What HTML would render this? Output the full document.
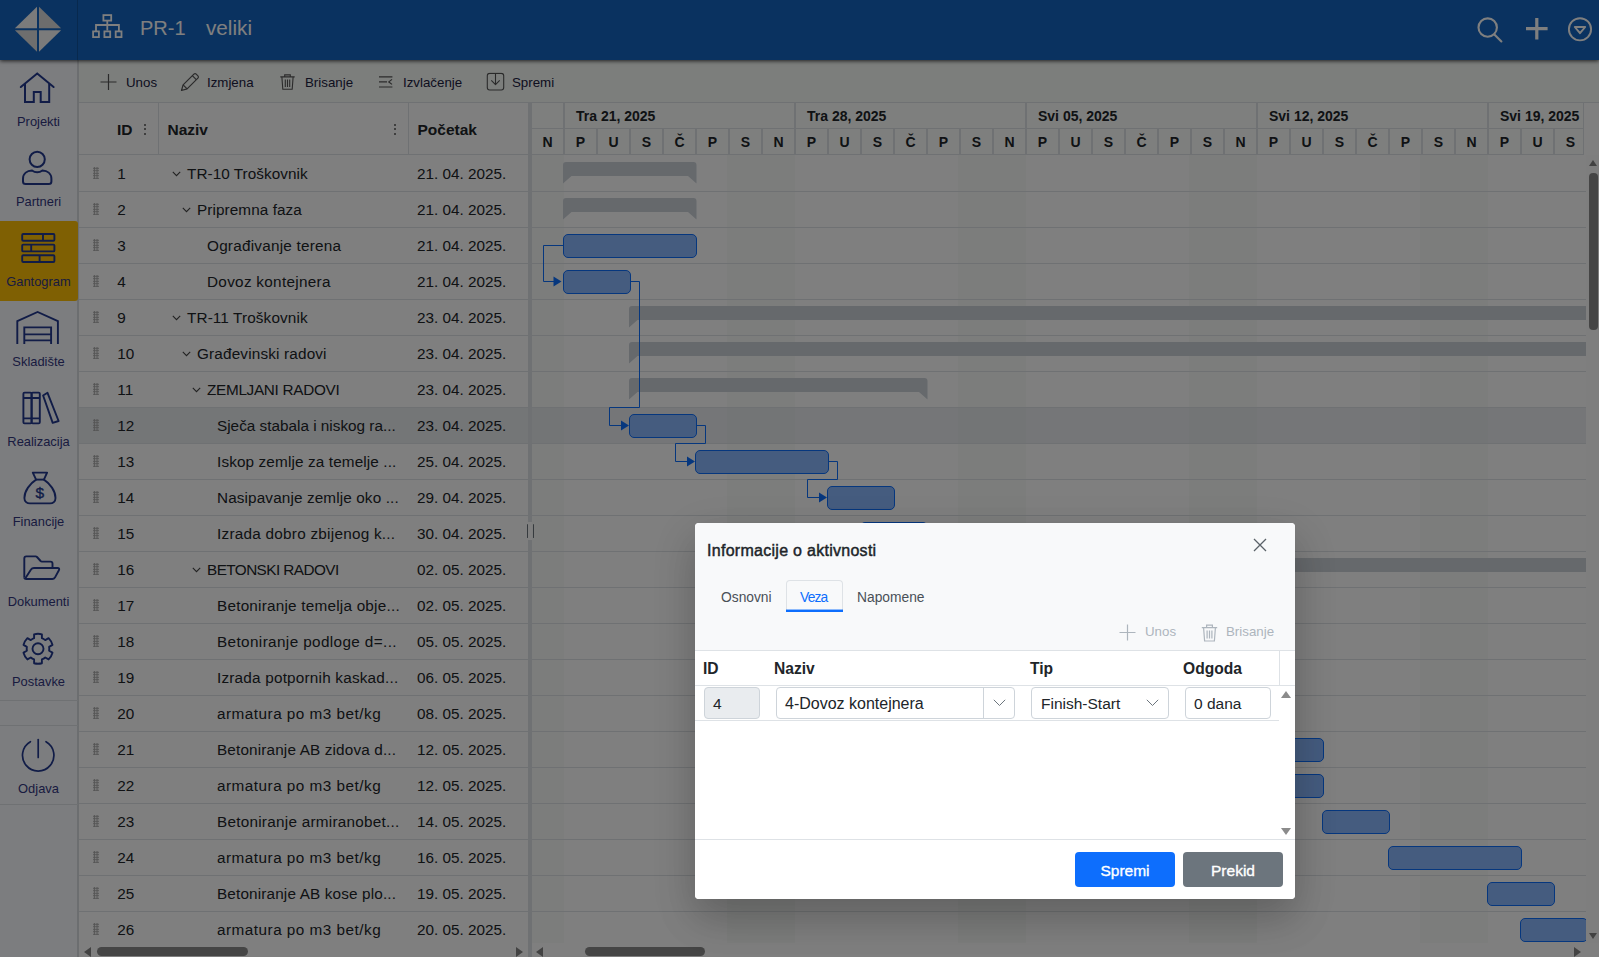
<!DOCTYPE html>
<html lang="hr"><head><meta charset="utf-8"><title>Gantogram</title>
<style>
html,body{margin:0;padding:0;background:#fff;}
body{width:1601px;height:958px;overflow:hidden;font-family:"Liberation Sans",sans-serif;color:#212529;}
#app{position:absolute;left:0;top:0;width:1599px;height:956.5px;overflow:hidden;background:#fff;}
#app *{box-sizing:border-box;}
.hdr{position:absolute;left:0;top:0;width:1599px;height:60px;background:#1565c0;box-shadow:0 1px 4px rgba(0,0,0,.75);z-index:5;}
.logo{position:absolute;left:0;top:0;width:78px;height:60px;border-right:1px solid rgba(0,0,0,.18);}
.orgico{position:absolute;left:90px;top:12px;}
.hdr .t1,.hdr .t2{position:absolute;top:16px;font-size:20px;line-height:24px;color:#fff;white-space:nowrap;}
.hdr .t1{left:140px;}
.hdr .t2{left:206px;font-size:20.7px;}
.hi{position:absolute;}
/* sidebar */
.side{position:absolute;left:0;top:60px;width:79px;height:897px;background:#f8fafe;border-right:2px solid #d9dce0;}
.sit{position:absolute;left:0;width:78px;height:80px;}
.sit svg{position:absolute;}
.sit span{position:absolute;left:0;width:77px;text-align:center;font-size:12.9px;line-height:16px;color:#33377f;white-space:nowrap;}
.sit.act{background:#ffc107;border-radius:0 3px 3px 0;}
.shr{position:absolute;left:0;width:78px;height:1px;background:#dee2e6;}
/* toolbar */
.tbar{position:absolute;left:79px;top:60px;width:1520px;height:42px;background:#f8fcf9;}
.ti{position:absolute;top:0;height:42px;margin-left:-79px;}
.ti svg{position:absolute;left:0;top:50%;transform:translateY(-50%);margin-top:1px;}
.ti span{position:absolute;top:15px;font-size:13.3px;line-height:16px;color:#202040;white-space:nowrap;}
/* grid */
.grid{position:absolute;left:79px;top:102px;width:449px;height:855px;background:#fff;overflow:hidden;}
.gh{position:absolute;left:0;top:0;width:449px;height:53px;border-top:1px solid #dee2e6;border-bottom:1px solid #dee2e6;font-weight:700;font-size:15.5px;line-height:20px;color:#212529;}
.in{position:absolute;left:1px;top:0;right:0;bottom:0;}
.gh .in>div{position:absolute;}
.c-id{left:37px;top:16.8px;}
.c-nm{left:87.5px;top:16.8px;}
.c-st{left:337.5px;top:16.8px;}
.vsep{top:0;width:1px;height:52px;background:#dee2e6;}
.dots{top:21px;width:3px;height:12px;}
.dots i{display:block;width:2px;height:2px;background:#555;margin-bottom:2.4px;border-radius:1px;}
.gr{position:absolute;left:0;width:449px;border-bottom:1px solid #dee2e6;font-size:15.3px;line-height:20px;white-space:nowrap;color:#212529;}
.gr.sel{background:#e9ecef;}
.gr span{position:absolute;top:8.1px;}
.gr .drag{left:13.4px;top:10.5px;width:5.4px;height:12.5px;background:radial-gradient(circle,#a8a8a8 0.95px,rgba(168,168,168,0) 1.25px) 0 0/2.7px 2.5px;}
.gr .rid{left:37.3px;}
.gr .rd{left:337px;}
.gr .chev{position:absolute;top:15px;}
.hsb,.hsb2{position:absolute;left:0;bottom:0;height:14px;background:#fff;}
.hsb{width:449px;}
.thumb{position:absolute;top:4px;height:9px;border-radius:4.5px;background:#8b8b8b;}
.al,.ar,.au,.ad{position:absolute;width:0;height:0;}
.al{left:4px;top:3.5px;border:5px solid transparent;border-right:7px solid #858585;border-left:0;}
.ar{top:3.5px;border:5px solid transparent;border-left:7px solid #858585;border-right:0;}
.split{position:absolute;left:528px;top:102px;width:4px;height:855px;background:#dee2e6;}
.sph{position:absolute;left:526px;top:522px;width:9px;height:18px;z-index:3;}
.sph b{position:absolute;left:2px;top:0;width:4px;height:18px;background:#fff;}
.sph i{position:absolute;top:2px;width:1.6px;height:14px;background:#6c757d;border-radius:1px;}
.sph i:nth-of-type(1){left:0.7px;}
.sph i:nth-of-type(2){left:6.8px;}
/* chart */
.chart{position:absolute;left:532px;top:102px;width:1067px;height:855px;background:#fff;overflow:hidden;}
.we{position:absolute;top:53px;height:790px;background:#f8faf8;}
.cl{position:absolute;left:0;width:1054px;height:1px;background:#dee2e6;}
.csel{position:absolute;left:0;width:1054px;height:35px;background:rgba(210,216,224,.45);}
.ctop{position:absolute;left:0;top:0;width:1067px;height:1px;background:#dee2e6;}
.tl{position:absolute;left:0;top:0;width:1052px;height:53px;background:#fcfefc;border-top:1px solid #dee2e6;border-bottom:1px solid #dee2e6;border-right:1px solid #dee2e6;font-weight:700;font-size:14px;color:#212529;overflow:hidden;}
.wk{position:absolute;top:0;height:26px;border-right:2px solid #dee2e6;border-bottom:1px solid #dee2e6;line-height:26px;white-space:nowrap;}
.wk span{position:absolute;left:11px;top:0;}
.dy{position:absolute;top:26px;height:26px;border-right:2px solid #dee2e6;text-align:center;line-height:26px;}
.tk{position:absolute;height:24px;border:1px solid #0d6efd;border-radius:5px;background:#8ab8ff;}
.sm{position:absolute;}
.cn{position:absolute;left:0;top:0;}
.vsb{position:absolute;left:1054px;top:53px;width:13px;height:802px;background:#fcfcfc;}
.au{left:3px;top:4.5px;border:4.5px solid transparent;border-bottom:6.5px solid #858585;border-top:0;}
.ad{left:3px;top:778px;border:4.5px solid transparent;border-top:6.5px solid #858585;border-bottom:0;}
.vth{position:absolute;left:3.3px;top:18px;width:8.7px;height:157px;border-radius:4px;background:#8b8b8b;}
.hsb2{width:1067px;}
/* overlay */
.ovl{position:absolute;left:0;top:0;width:1599px;height:956.5px;background:rgba(0,0,0,.5);z-index:10;}
/* modal */
.modal{position:absolute;left:695px;top:523px;width:600px;height:376px;background:#fff;border-radius:4px;z-index:20;overflow:hidden;box-shadow:0 20px 38px 0 rgba(0,0,0,.15),0 14px 46px 2px rgba(0,0,0,.10);}
.mhead{position:absolute;left:0;top:0;width:600px;height:128px;background:#f8f9fa;}
.mtitle{position:absolute;left:12px;top:17.7px;font-weight:400;font-size:16px;letter-spacing:0.28px;-webkit-text-stroke:0.45px #212529;line-height:20px;color:#212529;white-space:nowrap;}
.mclose{position:absolute;left:558px;top:15px;}
.tab{position:absolute;top:67px;font-size:13.8px;line-height:16px;color:#495057;white-space:nowrap;}
.tabbox{position:absolute;left:91px;top:57px;width:57px;height:31px;border:1px solid #dee2e6;border-bottom:none;border-radius:4px 4px 0 0;background:#f8f9fa;}
.tabline{position:absolute;left:91px;top:86px;width:57px;height:3px;background:linear-gradient(to bottom,rgba(13,110,253,.45) 0 1px,#0d6efd 1px);}
.mt{position:absolute;top:101.3px;font-size:13.3px;line-height:16px;color:#adb5bd;white-space:nowrap;}
.mgrid{position:absolute;left:0;top:127px;width:600px;height:190px;background:#fff;border-top:1px solid #dee2e6;border-bottom:1px solid #dee2e6;}
.mgh{position:absolute;left:0;top:0;width:600px;height:35px;border-bottom:1px solid #dee2e6;font-weight:700;font-size:15.6px;line-height:20px;color:#212529;}
.mgh span{position:absolute;top:7.7px;}
.mrow{position:absolute;left:0;top:35px;width:584px;height:35px;border-bottom:1px solid #dee2e6;font-size:15.5px;line-height:20px;color:#212529;}
.inp{position:absolute;top:1px;height:32px;border:1px solid #ced4da;border-radius:4px;background:#fff;}
.inp span{position:absolute;top:6px;white-space:nowrap;}
.mfoot{position:absolute;left:0;top:317px;width:600px;height:59px;background:#fff;}
.btn{position:absolute;top:12px;width:100px;height:35px;border-radius:4px;color:#fff;font-size:15.5px;line-height:37px;text-align:center;-webkit-text-stroke:0.35px #fff;}

</style></head><body>
<div id="app">
<div class="hdr">
<div class="logo"><svg width="78" height="60" viewBox="0 0 78 60">
<polygon points="14.9,28.2 37,6.7 37,28.2" fill="#f6f6f6"/>
<polygon points="39,6.7 61.1,28.2 39,28.2" fill="#dadada"/>
<polygon points="14.9,30.2 37,30.2 37,51.700" fill="#dcdcdc"/>
<polygon points="39,30.2 61.1,30.2 39,51.700" fill="#f6f6f6"/>
</svg></div>
<svg class="orgico" width="36" height="30" viewBox="90 12 36 30" fill="none" stroke="#fff" stroke-width="1.8">
<rect x="103.4" y="15.1" width="7.8" height="5.5"/><path d="M107.3 20.6v10M96 31v-6h22.9v6"/>
<rect x="93.1" y="31.4" width="5.8" height="5.7"/><rect x="104.4" y="31.4" width="5.8" height="5.7"/><rect x="115.7" y="31.4" width="5.8" height="5.7"/>
</svg>
<span class="t1">PR-1</span><span class="t2">veliki</span>
<svg class="hi" style="left:1476px;top:16px" width="28" height="28" viewBox="0 0 28 28" fill="none" stroke="#fff" stroke-width="2.1" stroke-linecap="round"><circle cx="11.700" cy="11.600" r="9.200"/><path d="M18.400 18.400l7 7"/></svg>
<svg class="hi" style="left:1524px;top:16px" width="26" height="26" viewBox="0 0 26 26" fill="none" stroke="#fff" stroke-width="3.200"><path d="M12.800 2v21.400M2 12.700h21.600"/></svg>
<svg class="hi" style="left:1567px;top:17px" width="26" height="26" viewBox="0 0 26 26" fill="none" stroke="#fff" stroke-width="1.900"><circle cx="13" cy="12.300" r="11.100"/><path d="M7.800 10h10.400l-5.200 6.200z" stroke-linejoin="round"/></svg>
</div>
<div class="side">
<div class="sit" style="top:0"><svg width="78" height="52" viewBox="0 0 78 52" fill="none" stroke="#22398f" stroke-width="2" stroke-linecap="round" stroke-linejoin="miter"><path d="M20.8 27L37.2 13.6 53.6 27"/><path d="M25 24v18h8.8V32h6.900v10h8.500V24" stroke-linecap="butt"/></svg><span style="top:54px">Projekti</span></div>
<div class="sit" style="top:80px"><svg width="78" height="52" viewBox="0 0 78 52" fill="none" stroke="#22398f" stroke-width="2"><circle cx="37.2" cy="19.3" r="7.6"/><path d="M23 41.500v-2.800c0-5.200 4.200-8 9-8.200 1.600 1.200 3.200 1.800 5.200 1.800s3.600-.6 5.200-1.800c4.800.2 9 3 9 8.200v2.800c0 1.600-1 2.600-2.600 2.600H25.600c-1.600 0-2.600-1-2.600-2.600z"/></svg><span style="top:54px">Partneri</span></div>
<div class="sit act" style="top:161px;height:80px"><svg style="top:-1px" width="78" height="52" viewBox="0 0 78 52" fill="none" stroke="#22398f" stroke-width="1.9"><rect x="22.2" y="14" width="32.2" height="6.8" rx="1"/><path d="M43 14v6.800"/><rect x="22.2" y="24.6" width="32.2" height="6.8" rx="1"/><path d="M31.200 24.600v6.800"/><rect x="22.2" y="35.2" width="32.2" height="6.8" rx="1"/><path d="M39.600 35.200v6.800"/></svg><span style="top:53px">Gantogram</span></div>
<div class="sit" style="top:240px"><svg width="78" height="52" viewBox="0 0 78 52" fill="none" stroke="#22398f" stroke-width="1.9" stroke-linejoin="miter"><path d="M17.300 44V21.200L37.600 12l20.300 9.200V44"/><path d="M24.300 44V27.400h26.800V44M24.300 34.400h26.800M24.300 40.400h26.800"/></svg><span style="top:54px">Skladište</span></div>
<div class="sit" style="top:320px"><svg width="78" height="52" viewBox="0 0 78 52" fill="none" stroke="#22398f" stroke-width="1.9" stroke-linejoin="round"><rect x="23.4" y="12.6" width="8.2" height="30.8" rx="1.2"/><rect x="31.600" y="12.600" width="8.200" height="30.800" rx="1.2"/><path d="M23.400 18h16.400M23.400 38.400h16.400"/><path d="M43.100 15.500l4.400-2.700 11.100 28.200-5.900 1.900z"/></svg><span style="top:54px">Realizacija</span></div>
<div class="sit" style="top:400px"><svg width="78" height="52" viewBox="0 0 78 52" fill="none" stroke="#22398f" stroke-width="1.9" stroke-linejoin="round"><path d="M32.800 12.600H47.100L43.900 19.600C50 23.500 55.500 31 55.500 38c0 3.500-2.500 5.400-5.500 5.400H30c-3 0-5.600-1.900-5.600-5.400 0-7 5.600-14.500 11.700-18.400z"/><path d="M36.100 19.600h7.800"/><text x="39.900" y="38.300" font-family="Liberation Sans,sans-serif" font-size="15.5" font-weight="400" fill="#22398f" stroke="#22398f" stroke-width="0.35" text-anchor="middle">$</text></svg><span style="top:54px">Financije</span></div>
<div class="sit" style="top:480px"><svg width="78" height="52" viewBox="0 0 78 52" fill="none" stroke="#22398f" stroke-width="1.9" stroke-linejoin="round"><path d="M24.300 37.500V18.400Q24.300 16.400 26.300 16.400H35.600Q36.400 16.400 37 17L40.600 21Q41 21.600 42 21.600H50.500Q52.500 21.600 52.500 23.600V28"/><path d="M25.200 38.400L31 29.600Q32 28 34 28H57.400Q60 28 58.900 30.300L54.900 37.600Q54 39 52.400 39H26.300Q24.300 39 24.300 37.500"/></svg><span style="top:54px">Dokumenti</span></div>
<div class="sit" style="top:560px"><svg width="78" height="52" viewBox="0 0 78 52" fill="none" stroke="#22398f" stroke-width="1.9" stroke-linejoin="round"><circle cx="38" cy="28.800" r="5.500"/><path d="M34.10 18.19 L34.10 14.32 A15.00 15.00 0 0 1 41.90 14.32 L41.90 18.19 A11.30 11.30 0 0 1 45.23 20.12 L48.59 18.18 A15.00 15.00 0 0 1 52.49 24.94 L49.13 26.87 A11.30 11.30 0 0 1 49.13 30.73 L52.49 32.66 A15.00 15.00 0 0 1 48.59 39.42 L45.23 37.48 A11.30 11.30 0 0 1 41.90 39.41 L41.90 43.28 A15.00 15.00 0 0 1 34.10 43.28 L34.10 39.41 A11.30 11.30 0 0 1 30.77 37.48 L27.41 39.42 A15.00 15.00 0 0 1 23.51 32.66 L26.87 30.73 A11.30 11.30 0 0 1 26.87 26.87 L23.51 24.94 A15.00 15.00 0 0 1 27.41 18.18 L30.77 20.12 A11.30 11.30 0 0 1 34.10 18.19 z"/></svg><span style="top:54px">Postavke</span></div>
<div class="shr" style="top:640px"></div>
<div class="shr" style="top:665px"></div>
<div class="sit" style="top:666px"><svg width="78" height="56" viewBox="0 0 78 56" fill="none" stroke="#22398f" stroke-width="1.700" stroke-linecap="round"><path d="M38.200 13.500v18"/><path d="M30.400 15.700a15.700 15.700 0 1 0 15.600 0"/></svg><span style="top:55px">Odjava</span></div>
<div class="shr" style="top:744px"></div>
</div>
<div class="tbar">
<div class="ti" style="left:100px"><svg width="17" height="17" viewBox="0 0 17 17" stroke="#555" stroke-width="1.2" fill="none"><path d="M8.5 0.5v16M0.5 8.5h16"/></svg><span style="left:26px">Unos</span></div>
<div class="ti" style="left:180px"><svg width="20" height="20" viewBox="0 0 20 20" stroke="#555" stroke-width="1.2" fill="none" stroke-linejoin="round"><path d="M1.5 18.5l1.6-5.6L13.9 2.1a1.6 1.6 0 0 1 2.3 0l1.7 1.7a1.6 1.6 0 0 1 0 2.3L7.1 16.9z"/><path d="M3.1 12.9l4 4M12.3 3.7l4 4"/></svg><span style="left:27px">Izmjena</span></div>
<div class="ti" style="left:280px"><svg width="15" height="16" viewBox="0 0 15 16" stroke="#555" stroke-width="1.1" fill="none"><path d="M0.300 2.900h14.400M4.700 2.800V0.900h5.600v1.900M1.900 3.100l.9 12.200h9.400l.9-12.200M5.300 5.500v7.400M7.500 5.500v7.400M9.700 5.500v7.400"/></svg><span style="left:25px">Brisanje</span></div>
<div class="ti" style="left:379px"><svg width="14" height="12" viewBox="0 0 14 12" stroke="#555" stroke-width="1.2" fill="none"><path d="M0 0.800h13.400M0 5.900h8M0 11h13.400M13 3.400l-3.200 2.500 3.200 2.500"/></svg><span style="left:24px">Izvlačenje</span></div>
<div class="ti" style="left:486px"><svg width="19" height="19" viewBox="0 0 19 19" stroke="#555" stroke-width="1.1" fill="none" stroke-linejoin="round"><rect x="1.300" y="0.900" width="16.400" height="16.600" rx="2.400"/><path d="M9.500 1.500v10.600M5.300 7.900l4.200 4.200 4.200-4.200"/></svg><span style="left:26px">Spremi</span></div>
</div>
<div class="grid">
<div class="gh"><div class="in"><div class="c-id">ID</div><div class="dots" style="left:64px"><i></i><i></i><i></i></div><div class="vsep" style="left:78px"></div><div class="c-nm">Naziv</div><div class="dots" style="left:314px"><i></i><i></i><i></i></div><div class="vsep" style="left:328px"></div><div class="c-st">Početak</div></div></div>
<div class="gr" style="top:54px;height:36px"><div class="in"><span class="drag"></span><span class="rid">1</span><svg class="chev" style="left:92px" width="9" height="6" viewBox="0 0 9 6" fill="none" stroke="#444" stroke-width="1.1"><path d="M0.8 0.8l3.7 3.8L8.2 0.8"/></svg><span class="rn" style="left:107px;letter-spacing:0.050px">TR-10 Troškovnik</span><span class="rd">21. 04. 2025.</span></div></div>
<div class="gr" style="top:90px;height:36px"><div class="in"><span class="drag"></span><span class="rid">2</span><svg class="chev" style="left:102px" width="9" height="6" viewBox="0 0 9 6" fill="none" stroke="#444" stroke-width="1.1"><path d="M0.8 0.8l3.7 3.8L8.2 0.8"/></svg><span class="rn" style="left:117px;letter-spacing:0.086px">Pripremna faza</span><span class="rd">21. 04. 2025.</span></div></div>
<div class="gr" style="top:126px;height:36px"><div class="in"><span class="drag"></span><span class="rid">3</span><span class="rn" style="left:127px;letter-spacing:0.228px">Ograđivanje terena</span><span class="rd">21. 04. 2025.</span></div></div>
<div class="gr" style="top:162px;height:36px"><div class="in"><span class="drag"></span><span class="rid">4</span><span class="rn" style="left:127px;letter-spacing:0.294px">Dovoz kontejnera</span><span class="rd">21. 04. 2025.</span></div></div>
<div class="gr" style="top:198px;height:36px"><div class="in"><span class="drag"></span><span class="rid">9</span><svg class="chev" style="left:92px" width="9" height="6" viewBox="0 0 9 6" fill="none" stroke="#444" stroke-width="1.1"><path d="M0.8 0.8l3.7 3.8L8.2 0.8"/></svg><span class="rn" style="left:107px;letter-spacing:0.125px">TR-11 Troškovnik</span><span class="rd">23. 04. 2025.</span></div></div>
<div class="gr" style="top:234px;height:36px"><div class="in"><span class="drag"></span><span class="rid">10</span><svg class="chev" style="left:102px" width="9" height="6" viewBox="0 0 9 6" fill="none" stroke="#444" stroke-width="1.1"><path d="M0.8 0.8l3.7 3.8L8.2 0.8"/></svg><span class="rn" style="left:117px;letter-spacing:0.167px">Građevinski radovi</span><span class="rd">23. 04. 2025.</span></div></div>
<div class="gr" style="top:270px;height:36px"><div class="in"><span class="drag"></span><span class="rid">11</span><svg class="chev" style="left:112px" width="9" height="6" viewBox="0 0 9 6" fill="none" stroke="#444" stroke-width="1.1"><path d="M0.8 0.8l3.7 3.8L8.2 0.8"/></svg><span class="rn" style="left:127px;letter-spacing:-0.300px">ZEMLJANI RADOVI</span><span class="rd">23. 04. 2025.</span></div></div>
<div class="gr sel" style="top:306px;height:36px"><div class="in"><span class="drag"></span><span class="rid">12</span><span class="rn" style="left:137px;letter-spacing:0.007px">Sječa stabala i niskog ra...</span><span class="rd">23. 04. 2025.</span></div></div>
<div class="gr" style="top:342px;height:36px"><div class="in"><span class="drag"></span><span class="rid">13</span><span class="rn" style="left:137px;letter-spacing:0.130px">Iskop zemlje za temelje ...</span><span class="rd">25. 04. 2025.</span></div></div>
<div class="gr" style="top:378px;height:36px"><div class="in"><span class="drag"></span><span class="rid">14</span><span class="rn" style="left:137px;letter-spacing:0.123px">Nasipavanje zemlje oko ...</span><span class="rd">29. 04. 2025.</span></div></div>
<div class="gr" style="top:414px;height:36px"><div class="in"><span class="drag"></span><span class="rid">15</span><span class="rn" style="left:137px;letter-spacing:0.254px">Izrada dobro zbijenog k...</span><span class="rd">30. 04. 2025.</span></div></div>
<div class="gr" style="top:450px;height:36px"><div class="in"><span class="drag"></span><span class="rid">16</span><svg class="chev" style="left:112px" width="9" height="6" viewBox="0 0 9 6" fill="none" stroke="#444" stroke-width="1.1"><path d="M0.8 0.8l3.7 3.8L8.2 0.8"/></svg><span class="rn" style="left:127px;letter-spacing:-0.560px">BETONSKI RADOVI</span><span class="rd">02. 05. 2025.</span></div></div>
<div class="gr" style="top:486px;height:36px"><div class="in"><span class="drag"></span><span class="rid">17</span><span class="rn" style="left:137px;letter-spacing:0.222px">Betoniranje temelja obje...</span><span class="rd">02. 05. 2025.</span></div></div>
<div class="gr" style="top:522px;height:36px"><div class="in"><span class="drag"></span><span class="rid">18</span><span class="rn" style="left:137px;letter-spacing:0.376px">Betoniranje podloge d=...</span><span class="rd">05. 05. 2025.</span></div></div>
<div class="gr" style="top:558px;height:36px"><div class="in"><span class="drag"></span><span class="rid">19</span><span class="rn" style="left:137px;letter-spacing:0.208px">Izrada potpornih kaskad...</span><span class="rd">06. 05. 2025.</span></div></div>
<div class="gr" style="top:594px;height:36px"><div class="in"><span class="drag"></span><span class="rid">20</span><span class="rn" style="left:137px;letter-spacing:0.490px">armatura po m3 bet/kg</span><span class="rd">08. 05. 2025.</span></div></div>
<div class="gr" style="top:630px;height:36px"><div class="in"><span class="drag"></span><span class="rid">21</span><span class="rn" style="left:137px;letter-spacing:0.154px">Betoniranje AB zidova d...</span><span class="rd">12. 05. 2025.</span></div></div>
<div class="gr" style="top:666px;height:36px"><div class="in"><span class="drag"></span><span class="rid">22</span><span class="rn" style="left:137px;letter-spacing:0.490px">armatura po m3 bet/kg</span><span class="rd">12. 05. 2025.</span></div></div>
<div class="gr" style="top:702px;height:36px"><div class="in"><span class="drag"></span><span class="rid">23</span><span class="rn" style="left:137px;letter-spacing:0.250px">Betoniranje armiranobet...</span><span class="rd">14. 05. 2025.</span></div></div>
<div class="gr" style="top:738px;height:36px"><div class="in"><span class="drag"></span><span class="rid">24</span><span class="rn" style="left:137px;letter-spacing:0.490px">armatura po m3 bet/kg</span><span class="rd">16. 05. 2025.</span></div></div>
<div class="gr" style="top:774px;height:36px"><div class="in"><span class="drag"></span><span class="rid">25</span><span class="rn" style="left:137px;letter-spacing:0.154px">Betoniranje AB kose plo...</span><span class="rd">19. 05. 2025.</span></div></div>
<div class="gr" style="top:810px;height:36px"><div class="in"><span class="drag"></span><span class="rid">26</span><span class="rn" style="left:137px;letter-spacing:0.490px">armatura po m3 bet/kg</span><span class="rd">20. 05. 2025.</span></div></div>
<div class="hsb"><span class="al" style="left:5px"></span><span class="thumb" style="left:18px;width:151px"></span><span class="ar" style="left:437px"></span></div>
</div>
<div class="split"></div><div class="sph"><b></b><i></i><i></i></div>
<div class="chart">
<div class="we" style="left:0px;width:32px"></div><div class="we" style="left:195px;width:68px"></div><div class="we" style="left:426px;width:68px"></div><div class="we" style="left:657px;width:68px"></div><div class="we" style="left:888px;width:68px"></div><div class="we" style="left:1119px;width:68px"></div>
<div class="cl" style="top:89px"></div><div class="cl" style="top:125px"></div><div class="cl" style="top:161px"></div><div class="cl" style="top:197px"></div><div class="cl" style="top:233px"></div><div class="cl" style="top:269px"></div><div class="cl" style="top:305px"></div><div class="cl" style="top:341px"></div><div class="cl" style="top:377px"></div><div class="cl" style="top:413px"></div><div class="cl" style="top:449px"></div><div class="cl" style="top:485px"></div><div class="cl" style="top:521px"></div><div class="cl" style="top:557px"></div><div class="cl" style="top:593px"></div><div class="cl" style="top:629px"></div><div class="cl" style="top:665px"></div><div class="cl" style="top:701px"></div><div class="cl" style="top:737px"></div><div class="cl" style="top:773px"></div><div class="cl" style="top:809px"></div><div class="cl" style="top:845px"></div>
<div class="csel" style="top:306px"></div>
<div class="ctop"></div><div class="tl"><div class="wk" style="left:0;width:33px"></div><div class="wk" style="left:33px;width:231px"><span>Tra 21, 2025</span></div><div class="wk" style="left:264px;width:231px"><span>Tra 28, 2025</span></div><div class="wk" style="left:495px;width:231px"><span>Svi 05, 2025</span></div><div class="wk" style="left:726px;width:231px"><span>Svi 12, 2025</span></div><div class="wk" style="left:957px;width:231px"><span>Svi 19, 2025</span></div><div class="dy" style="left:0;width:33px">N</div><div class="dy" style="left:33px;width:33px">P</div><div class="dy" style="left:66px;width:33px">U</div><div class="dy" style="left:99px;width:33px">S</div><div class="dy" style="left:132px;width:33px">Č</div><div class="dy" style="left:165px;width:33px">P</div><div class="dy" style="left:198px;width:33px">S</div><div class="dy" style="left:231px;width:33px">N</div><div class="dy" style="left:264px;width:33px">P</div><div class="dy" style="left:297px;width:33px">U</div><div class="dy" style="left:330px;width:33px">S</div><div class="dy" style="left:363px;width:33px">Č</div><div class="dy" style="left:396px;width:33px">P</div><div class="dy" style="left:429px;width:33px">S</div><div class="dy" style="left:462px;width:33px">N</div><div class="dy" style="left:495px;width:33px">P</div><div class="dy" style="left:528px;width:33px">U</div><div class="dy" style="left:561px;width:33px">S</div><div class="dy" style="left:594px;width:33px">Č</div><div class="dy" style="left:627px;width:33px">P</div><div class="dy" style="left:660px;width:33px">S</div><div class="dy" style="left:693px;width:33px">N</div><div class="dy" style="left:726px;width:33px">P</div><div class="dy" style="left:759px;width:33px">U</div><div class="dy" style="left:792px;width:33px">S</div><div class="dy" style="left:825px;width:33px">Č</div><div class="dy" style="left:858px;width:33px">P</div><div class="dy" style="left:891px;width:33px">S</div><div class="dy" style="left:924px;width:33px">N</div><div class="dy" style="left:957px;width:33px">P</div><div class="dy" style="left:990px;width:33px">U</div><div class="dy" style="left:1023px;width:33px">S</div><div class="dy" style="left:1056px;width:33px">Č</div><div class="dy" style="left:1089px;width:33px">P</div><div class="dy" style="left:1122px;width:33px">S</div><div class="dy" style="left:1155px;width:33px">N</div></div>
<svg class="sm" style="left:31.3px;top:60px" width="133.5" height="22" viewBox="0 0 133.5 22"><path d="M0 3a3 3 0 0 1 3-3h127.5a3 3 0 0 1 3 3v18.5l-8.5-7.5h-116.5l-8.5 7.5z" fill="#ccd2d9"/></svg><svg class="sm" style="left:31.3px;top:96px" width="133.5" height="22" viewBox="0 0 133.5 22"><path d="M0 3a3 3 0 0 1 3-3h127.5a3 3 0 0 1 3 3v18.5l-8.5-7.5h-116.5l-8.5 7.5z" fill="#ccd2d9"/></svg><div class="tk" style="left:31.3px;top:132px;width:133.5px"></div><div class="tk" style="left:31.3px;top:168px;width:67.5px"></div><svg class="sm" style="left:97.3px;top:204px" width="1321.5" height="22" viewBox="0 0 1321.5 22"><path d="M0 3a3 3 0 0 1 3-3h1315.5a3 3 0 0 1 3 3v18.5l-8.5-7.5h-1304.5l-8.5 7.5z" fill="#ccd2d9"/></svg><svg class="sm" style="left:97.3px;top:240px" width="1321.5" height="22" viewBox="0 0 1321.5 22"><path d="M0 3a3 3 0 0 1 3-3h1315.5a3 3 0 0 1 3 3v18.5l-8.5-7.5h-1304.5l-8.5 7.5z" fill="#ccd2d9"/></svg><svg class="sm" style="left:97.3px;top:276px" width="298.5" height="22" viewBox="0 0 298.5 22"><path d="M0 3a3 3 0 0 1 3-3h292.5a3 3 0 0 1 3 3v18.5l-8.5-7.5h-281.5l-8.5 7.5z" fill="#ccd2d9"/></svg><div class="tk" style="left:97.3px;top:312px;width:67.5px"></div><div class="tk" style="left:163.3px;top:348px;width:133.5px"></div><div class="tk" style="left:295.3px;top:384px;width:67.5px"></div><div class="tk" style="left:328.3px;top:420px;width:67.5px"></div><svg class="sm" style="left:394.3px;top:456px" width="1321.5" height="22" viewBox="0 0 1321.5 22"><path d="M0 3a3 3 0 0 1 3-3h1315.5a3 3 0 0 1 3 3v18.5l-8.5-7.5h-1304.5l-8.5 7.5z" fill="#ccd2d9"/></svg><div class="tk" style="left:394.3px;top:492px;width:34.5px"></div><div class="tk" style="left:493.3px;top:528px;width:34.5px"></div><div class="tk" style="left:526.3px;top:564px;width:67.5px"></div><div class="tk" style="left:592.3px;top:600px;width:133.5px"></div><div class="tk" style="left:724.3px;top:636px;width:67.5px"></div><div class="tk" style="left:724.3px;top:672px;width:67.5px"></div><div class="tk" style="left:790.3px;top:708px;width:67.5px"></div><div class="tk" style="left:856.3px;top:744px;width:133.5px"></div><div class="tk" style="left:955.3px;top:780px;width:67.5px"></div><div class="tk" style="left:988.3px;top:816px;width:67.5px"></div>
<svg class="cn" width="1054" height="841" viewBox="0 0 1054 841" fill="none" stroke="#0d6efd" stroke-width="1"><path d="M31.5 143.5 L11.5 143.5 L11.5 179.5 L22.0 179.5"/><path d="M99.0 179.5 L107.5 179.5 L107.5 305.5 L77.5 305.5 L77.5 323.5 L89.0 323.5"/><path d="M165.0 323.5 L173.5 323.5 L173.5 341.5 L143.5 341.5 L143.5 359.5 L155.0 359.5"/><path d="M297.0 359.5 L305.5 359.5 L305.5 377.5 L275.5 377.5 L275.5 395.5 L287.0 395.5"/><path d="M29.5 179.5 L21.5 174.5 L21.5 184.5 z" fill="#0d6efd" stroke="none"/><path d="M97.0 323.5 L89.0 318.5 L89.0 328.5 z" fill="#0d6efd" stroke="none"/><path d="M163.0 359.5 L155.0 354.5 L155.0 364.5 z" fill="#0d6efd" stroke="none"/><path d="M295.0 395.5 L287.0 390.5 L287.0 400.5 z" fill="#0d6efd" stroke="none"/></svg>
<div class="vsb"><span class="au"></span><span class="vth"></span><span class="ad"></span></div>
<div class="hsb2"><span class="al"></span><span class="thumb" style="left:52.5px;width:120px"></span><span class="ar" style="left:1042px"></span></div>
</div>
<div class="ovl"></div>
<div class="modal">
<div class="mhead">
<div class="mtitle">Informacije o aktivnosti</div>
<svg class="mclose" width="14" height="14" viewBox="0 0 14 14" fill="none" stroke="#5a6268" stroke-width="1.3"><path d="M1 1l12 12M13 1L1 13"/></svg>
<div class="tabbox"></div><div class="tabline"></div>
<span class="tab" style="left:26px">Osnovni</span>
<span class="tab" style="left:105px;color:#0d6efd;letter-spacing:-0.8px">Veza</span>
<span class="tab" style="left:162px">Napomene</span>
<svg style="position:absolute;left:424px;top:101px" width="17" height="17" viewBox="0 0 17 17" stroke="#adb5bd" stroke-width="1.2" fill="none"><path d="M8.500 0.500v16M0.500 8.500h16"/></svg>
<span class="mt" style="left:450px">Unos</span>
<svg style="position:absolute;left:506px;top:101px" width="17" height="18" viewBox="0 0 17 18" stroke="#adb5bd" stroke-width="1.2" fill="none"><path d="M0.800 3.600h15.400M5.600 3.400V1.200h5.800v2.200M2.600 3.800l1 13.200h9.800l1-13.200M6.100 6.500v8M8.500 6.500v8M10.900 6.500v8"/></svg>
<span class="mt" style="left:531px">Brisanje</span>
</div>
<div class="mgrid">
<div class="mgh"><span style="left:8px">ID</span><span style="left:79px">Naziv</span><span style="left:335px">Tip</span><span style="left:488px">Odgoda</span><i style="position:absolute;left:584px;top:0;width:1px;height:34px;background:#dee2e6"></i></div>
<div class="mrow">
<div class="inp" style="left:9px;width:56px;background:#e9ecef"><span style="left:8px">4</span></div>
<div class="inp" style="left:81px;width:239px"><span style="left:8px;font-size:16px">4-Dovoz kontejnera</span><i style="position:absolute;left:206px;top:0;width:1px;height:30px;background:#ced4da"></i><svg style="position:absolute;left:216px;top:11px" width="13" height="8" viewBox="0 0 13 8" fill="none" stroke="#6c757d" stroke-width="1"><path d="M0.800 0.800l5.700 5.700 5.700-5.700"/></svg></div>
<div class="inp" style="left:336px;width:138px"><span style="left:9px">Finish-Start</span><svg style="position:absolute;left:114px;top:11px" width="13" height="8" viewBox="0 0 13 8" fill="none" stroke="#6c757d" stroke-width="1"><path d="M0.800 0.800l5.700 5.700 5.700-5.700"/></svg></div>
<div class="inp" style="left:490px;width:86px"><span style="left:8px">0 dana</span></div>
</div>
<span style="position:absolute;left:586px;top:40px;width:0;height:0;border:5px solid transparent;border-bottom:7px solid #8b8b8b;border-top:0"></span>
<span style="position:absolute;left:586px;top:177px;width:0;height:0;border:5px solid transparent;border-top:7px solid #8b8b8b;border-bottom:0"></span>
</div>
<div class="mfoot">
<div class="btn" style="left:380px;background:#0d6efd">Spremi</div>
<div class="btn" style="left:488px;background:#6c757d">Prekid</div>
</div>
</div>
</div>
</body></html>
